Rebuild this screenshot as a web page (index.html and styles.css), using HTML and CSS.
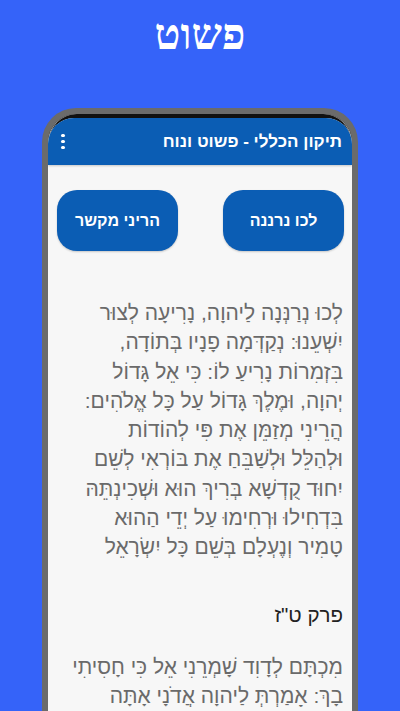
FILE: index.html
```html
<!DOCTYPE html>
<html lang="he" dir="rtl">
<head>
<meta charset="utf-8">
<link rel="stylesheet" href="styles.css">
</head>
<body>
<div class="page">
  <h1 class="hero">פשוט</h1>
  <div class="phone">
    <div class="screen">
      <div class="appbar">
        <span class="app-title">תיקון הכללי - פשוט ונוח</span>
        <span class="menu"><i></i><i></i><i></i></span>
      </div>
      <div class="content">
        <div class="buttons">
          <div class="btn">לכו נרננה</div>
          <div class="btn">הריני מקשר</div>
        </div>
        <div class="verse">
          <div>לְכוּ נְרַנְּנָה לַיהוָה, נָרִיעָה לְצוּר</div>
          <div>יִשְׁעֵנוּ: נְקַדְּמָה פָנָיו בְּתוֹדָה,</div>
          <div>בִּזְמִרוֹת נָרִיעַ לוֹ: כִּי אֵל גָּדוֹל</div>
          <div>יְהוָה, וּמֶלֶךְ גָּדוֹל עַל כָּל אֱלֹהִים:</div>
          <div>הֲרֵינִי מְזַמֵּן אֶת פִּי לְהוֹדוֹת</div>
          <div>וּלְהַלֵּל וּלְשַׁבֵּחַ אֶת בּוֹרְאִי לְשֵׁם</div>
          <div>יִחוּד קֻדְשָׁא בְּרִיךְ הוּא וּשְׁכִינְתֵּהּ</div>
          <div>בִּדְחִילוּ וּרְחִימוּ עַל יְדֵי הַהוּא</div>
          <div>טָמִיר וְנֶעְלָם בְּשֵׁם כָּל יִשְׂרָאֵל</div>
        </div>
        <div class="chapter">פרק ט"ז</div>
        <div class="verse">
          <div>מִכְתָּם לְדָוִד שָׁמְרֵנִי אֵל כִּי חָסִיתִי</div>
          <div>בָךְ: אָמַרְתְּ לַיהוָה אֲדֹנָי אָתָּה</div>
        </div>
      </div>
    </div>
  </div>
</div>
</body>
</html>
```
FILE: styles.css
```css
html, body {
  margin: 0;
  padding: 0;
}
body {
  width: 400px;
  height: 711px;
  overflow: hidden;
  background: #3563f9;
  font-family: "Liberation Sans", "DejaVu Sans", sans-serif;
}
.page {
  display: flex;
  flex-direction: column;
  height: 711px;
}
.hero {
  margin: 0;
  height: 108px;
  box-sizing: border-box;
  padding-top: 11px;
  text-align: center;
  color: #fff;
  font-family: "Liberation Serif", "DejaVu Serif", serif;
  font-weight: bold;
  font-size: 43px;
  line-height: 48px;
}
.phone {
  margin: 0 42px;
  flex: 1;
  border: 6px solid #6b6b6b;
  border-bottom: 0;
  border-radius: 34px 34px 0 0;
  box-shadow: inset 1px 0 0 #aaa, inset -1px 0 0 #aaa;
  overflow: hidden;
  background: #111;
  padding-top: 4px;
}
.screen {
  background: #f7f7f7;
  height: 100%;
  border-radius: 26px 26px 0 0;
  overflow: hidden;
}
.appbar {
  height: 47px;
  background: #0b5db4;
  display: flex;
  align-items: center;
  justify-content: space-between;
  padding: 0 10px 0 10px;
  box-shadow: 0 1px 2px rgba(0,0,0,0.2);
}
.app-title {
  color: #fff;
  font-weight: bold;
  font-size: 17px;
}
.menu {
  display: flex;
  flex-direction: column;
  gap: 2.5px;
  padding: 0 3px;
}
.menu i {
  width: 3.5px;
  height: 3.5px;
  border-radius: 50%;
  background: #fff;
}
.content {
  padding: 25px 8px 0 9px;
}
.buttons {
  display: flex;
  justify-content: space-between;
}
.btn {
  width: 121px;
  height: 61px;
  border-radius: 20px;
  background: #0b5db4;
  color: #fff;
  font-weight: bold;
  font-size: 16px;
  display: flex;
  align-items: center;
  justify-content: center;
  box-shadow: 0 1px 2px rgba(0,0,0,0.2);
}
.verse {
  color: #6a6a6a;
  font-size: 21px;
  line-height: 29.3px;
  white-space: nowrap;
  padding-right: 1px;
}
.buttons + .verse {
  margin-top: 47px;
}
.chapter {
  color: #222;
  font-size: 20.5px;
  line-height: 30px;
  margin: 38px 1px 22px 0;
}
```
